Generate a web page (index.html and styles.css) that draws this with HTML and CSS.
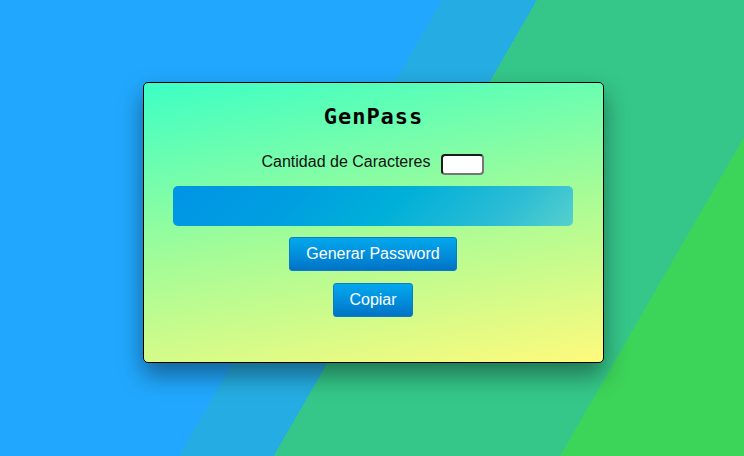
FILE: index.html
```html
<!DOCTYPE html>
<html lang="es">
<head>
<meta charset="utf-8">
<title>GenPass</title>
<link rel="stylesheet" href="styles.css">
</head>
<body>
<main class="stage">
  <section class="card">
    <h1 class="title">GenPass</h1>
    <div class="length-row">
      <label class="length-label" for="len">Cantidad de Caracteres</label>
      <input class="length-input" id="len" type="text">
    </div>
    <div class="output"></div>
    <button class="btn" type="button">Generar Password</button>
    <button class="btn btn-small" type="button">Copiar</button>
  </section>
</main>
</body>
</html>
```

FILE: styles.css
```css
html, body {
  margin: 0;
  padding: 0;
}

body {
  width: 744px;
  height: 456px;
  overflow: hidden;
  font-family: "Liberation Sans", Arial, sans-serif;
  background: linear-gradient(120deg,
    #21a8fe 0px, #21a8fe 383px,
    #25ade3 383px, #25ade3 465px,
    #35c78a 465px, #35c78a 713px,
    #3dd45a 713px, #3dd45a 100%);
}

.stage {
  height: 456px;
  box-sizing: border-box;
  padding: 0 0 11px 2px;
  display: flex;
  align-items: center;
  justify-content: center;
}

.card {
  width: 461px;
  box-sizing: border-box;
  border: 1px solid #000;
  border-radius: 5px;
  padding: 20px 0 45px;
  display: flex;
  flex-direction: column;
  align-items: center;
  background: linear-gradient(170deg, #3cffc5 0%, #a2fc98 50%, #fefa7c 100%);
  box-shadow: 0 12px 24px rgba(0, 0, 0, 0.42);
}

.title {
  margin: 0;
  font-family: "DejaVu Sans Mono", "Liberation Mono", monospace;
  font-weight: bold;
  font-size: 22px;
  letter-spacing: 1px;
  padding-left: 1px;
  line-height: 27px;
  color: #000;
}

.length-row {
  margin-top: 24px;
  display: flex;
  align-items: flex-start;
  gap: 11px;
  height: 20px;
}

.length-label {
  font-size: 16px;
  line-height: 18px;
  color: #111;
  margin-top: -1px;
}

.length-input {
  box-sizing: border-box;
  width: 43px;
  height: 21px;
  margin: 0;
  padding: 0 2px;
  background: #fff;
  border: 2px solid;
  border-color: #1c1c1c #767676 #767676 #1c1c1c;
  border-radius: 4px;
  font: 13px "Liberation Sans", Arial, sans-serif;
}

.output {
  margin-top: 12px;
  width: 400px;
  height: 40px;
  border-radius: 5px;
  background: linear-gradient(135deg, #0094e6 0%, #009fe0 30%, #00b0d8 55%, #2dbdd5 82%, #56d1cc 100%);
}

.btn {
  margin-top: 11px;
  height: 34px;
  padding: 0 16px;
  box-sizing: border-box;
  border: 1px solid #0a7cc9;
  border-radius: 3px;
  background: linear-gradient(to bottom, #03a7ed 0%, #028fdc 50%, #0172c6 100%);
  color: #fff;
  font-family: "Liberation Sans", Arial, sans-serif;
  font-size: 16px;
  line-height: 18px;
  cursor: pointer;
}

.btn-small {
  margin-top: 12px;
  padding: 0 15px;
}
```
